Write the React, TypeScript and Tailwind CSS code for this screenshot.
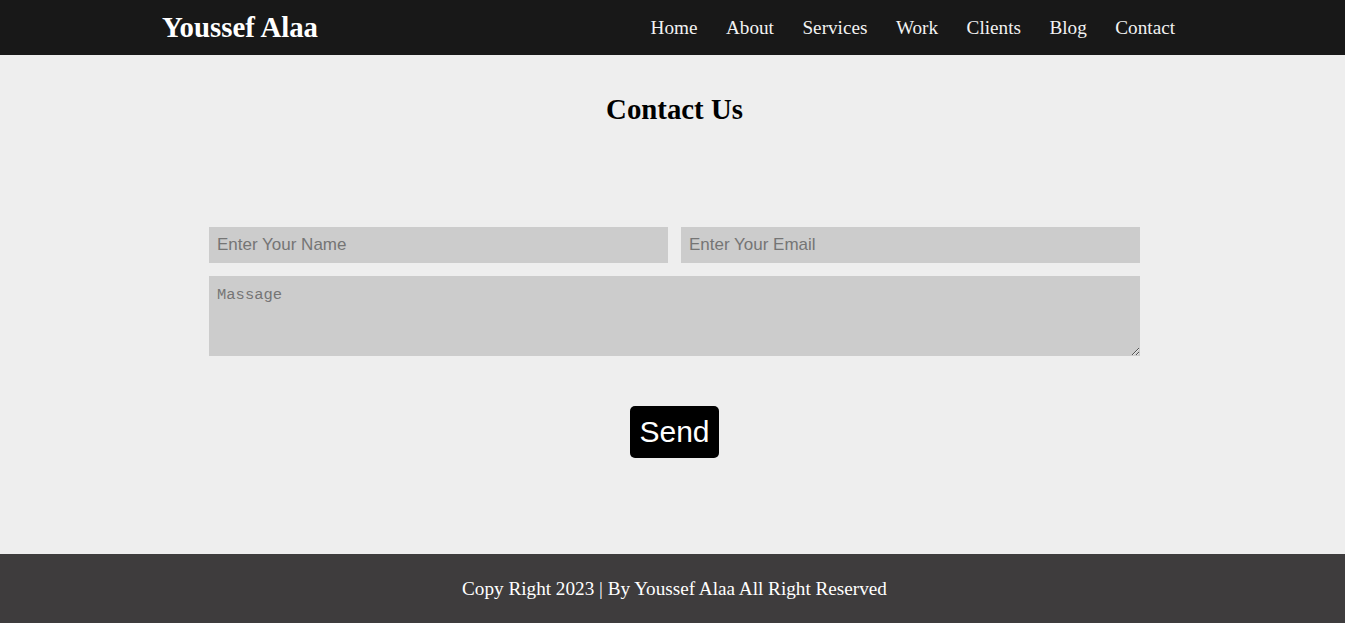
import React from "react"

const links = ["Home", "About", "Services", "Work", "Clients", "Blog", "Contact"]

export default function App() {
    return (
        <div className="min-h-screen flex flex-col bg-[#eeeeee] font-['Liberation_Serif','Times_New_Roman',serif]">
            {/* Header */}
            <header className="h-[55px] bg-[#181818] text-white">
                <div className="w-[1021px] mx-auto h-full flex items-center justify-between">
                    <a className="text-[28.8px] font-bold leading-none">Youssef Alaa</a>
                    <nav className="flex items-center gap-[28.5px] pr-[8px]">
                        {links.map((l) => (
                            <a key={l} className="text-[19.2px] leading-none text-[#f2f2f2] cursor-pointer">{l}</a>
                        ))}
                    </nav>
                </div>
            </header>

            {/* Contact */}
            <main className="h-[499px] flex flex-col items-center pt-[38px] pl-[4px]">
                <h2 className="text-[28.8px] font-bold leading-[32px] text-black">Contact Us</h2>
                <form className="w-[931px] mt-[102px] flex flex-col gap-[13px]" onSubmit={(e) => e.preventDefault()}>
                    <div className="flex gap-[13px]">
                        <input
                            type="text"
                            placeholder="Enter Your Name"
                            className="flex-1 h-[36px] px-[8px] bg-[#cccccc] outline-none font-['Liberation_Sans',Arial,sans-serif] text-[17px] placeholder:text-[#757575]"
                        />
                        <input
                            type="email"
                            placeholder="Enter Your Email"
                            className="flex-1 h-[36px] px-[8px] bg-[#cccccc] outline-none font-['Liberation_Sans',Arial,sans-serif] text-[17px] placeholder:text-[#757575]"
                        />
                    </div>
                    <textarea
                        placeholder="Massage"
                        className="h-[80px] px-[8px] pt-[9px] bg-[#cccccc] outline-none font-['Liberation_Mono','Courier_New',monospace] text-[15.5px] leading-[20px] placeholder:text-[#757575] resize"
                    />
                    <div className="flex justify-center mt-[37px]">
                        <button className="h-[52px] px-[9px] bg-black text-white rounded-[5px] font-['Liberation_Sans',Arial,sans-serif] text-[30px] leading-none">
                            Send
                        </button>
                    </div>
                </form>
            </main>

            {/* Footer */}
            <footer className="h-[69px] bg-[#3e3c3d] flex items-center justify-center pl-[4px]">
                <p className="text-[19.2px] text-white leading-none">Copy Right 2023 | By Youssef Alaa All Right Reserved</p>
            </footer>
        </div>
    )
}
